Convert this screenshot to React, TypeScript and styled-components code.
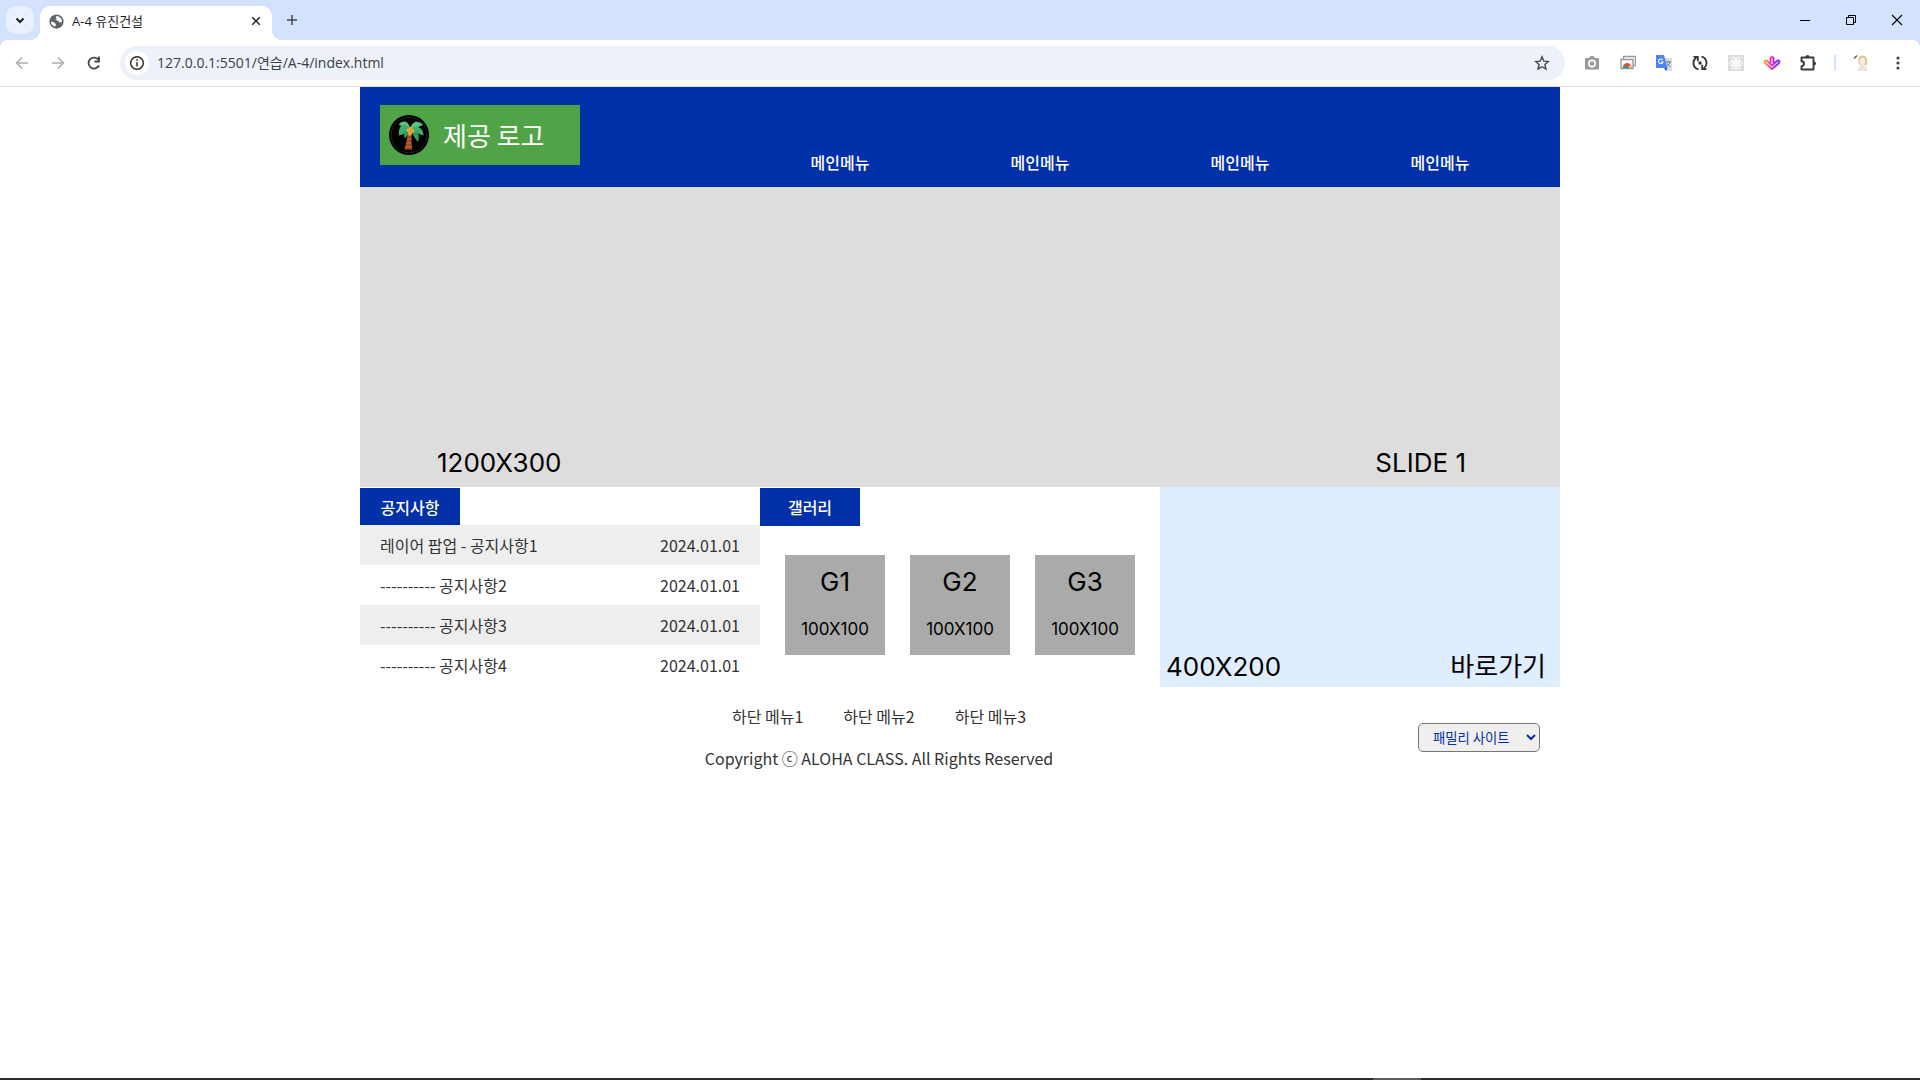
import React from "react";
import styled, { createGlobalStyle } from "styled-components";

const kr = `"Noto Sans CJK KR", sans-serif`;
const art = `Inter, "Noto Sans CJK KR", sans-serif`;
const chromeFont = `"Open Sans", "Noto Sans CJK KR", sans-serif`;

const GlobalStyle = createGlobalStyle`
  *, *::before, *::after { box-sizing: border-box; }
  body { margin: 0; background: #fff; color: #333; font: 16px/24px ${kr}; }
  h1, h2, p, ul { margin: 0; padding: 0; }
  ul { list-style: none; }
  a { color: inherit; text-decoration: none; }
  button { border: 0; padding: 0; background: none; color: inherit; font: inherit; }
  svg { display: block; flex: none; }
`;

const Screen = styled.div`
  display: flex;
  flex-direction: column;
  min-height: 100vh;
`;

/* ---------- browser frame ---------- */
const TabStrip = styled.div`
  display: flex;
  height: 40px;
  padding-left: 6px;
  background: #d3e3fd;
`;
const TabSearch = styled.button`
  display: grid;
  place-items: center;
  align-self: center;
  width: 28px;
  height: 28px;
  margin-right: 6px;
  border-radius: 10px;
  background: #e9f1fe;
  color: #1f1f1f;
`;
const Tab = styled.div`
  position: relative;
  display: flex;
  align-items: center;
  gap: 8px;
  width: 232px;
  margin-top: 6px;
  padding: 0 10px 4px 9px;
  border-radius: 10px 10px 0 0;
  background: #fff;
  color: #1f1f1f;
  font: 13px/20px ${chromeFont};
  &::before, &::after {
    content: "";
    position: absolute;
    bottom: 0;
    width: 10px;
    height: 10px;
  }
  &::before {
    left: -10px;
    background: radial-gradient(circle at 0 0, transparent 10px, #fff 10px);
  }
  &::after {
    right: -10px;
    background: radial-gradient(circle at 100% 0, transparent 10px, #fff 10px);
  }
`;
const TabTitle = styled.span`
  flex: 1;
`;
const IconButton = styled.button<{ $size?: number; $color?: string }>`
  display: grid;
  place-items: center;
  flex: none;
  width: ${(p) => p.$size ?? 36}px;
  height: ${(p) => p.$size ?? 36}px;
  color: ${(p) => p.$color ?? "#474747"};
`;
const WindowControls = styled.div`
  display: flex;
  margin-left: auto;
`;
const WindowButton = styled.button`
  display: grid;
  place-items: center;
  width: 46px;
  height: 40px;
  color: #000;
`;
const Toolbar = styled.div`
  display: flex;
  align-items: center;
  height: 47px;
  padding: 0 4px;
  border-bottom: 1px solid #dfe1e5;
  border-radius: 8px 8px 0 0;
  background: #fff;
`;
const ToolbarBack = styled.div`
  background: #d3e3fd;
`;
const AddressBar = styled.form`
  display: flex;
  align-items: center;
  flex: 1;
  height: 34px;
  margin: 0 9px 0 8px;
  padding: 0 5px;
  border-radius: 17px;
  background: #edf2fa;
`;
const SiteInfo = styled.button`
  display: grid;
  place-items: center;
  width: 24px;
  height: 24px;
  border-radius: 12px;
  background: #fff;
  color: #333;
`;
const AddressInput = styled.input`
  flex: 1;
  min-width: 0;
  padding: 0 8px;
  border: 0;
  outline: 0;
  background: none;
  color: #3c4043;
  font: 14px/20px ${chromeFont};
`;
const Separator = styled.span`
  width: 2px;
  height: 16px;
  margin: 0 8px;
  background: #d3e3fd;
`;
const Taskbar = styled.div`
  display: flex;
  height: 2px;
  margin-top: auto;
  padding-right: 26%;
  justify-content: flex-end;
  background: #2d2a2b;
`;
const TaskbarItem = styled.span`
  width: 48px;
  background: #5d5b5c;
`;

/* ---------- site ---------- */
const Site = styled.div`
  width: 100%;
  max-width: 1200px;
  margin: 0 auto;
`;
const Header = styled.header`
  display: flex;
  justify-content: space-between;
  height: 100px;
  padding: 18px 20px 13px;
  background: #0230a9;
`;
const Logo = styled.a`
  display: flex;
  align-items: center;
  gap: 14px;
  width: 200px;
  height: 60px;
  padding: 0 9px;
  background: #50a346;
  && { color: #fff; }
  font: 26px/36px ${kr};
`;
const Nav = styled.nav`
  align-self: flex-end;
  width: 800px;
`;
const MainMenu = styled.ul`
  display: grid;
  grid-template-columns: repeat(4, 1fr);
  color: #fff;
  font-weight: 500;
  text-align: center;
`;
const Slide = styled.section`
  display: flex;
  justify-content: space-between;
  align-items: flex-end;
  height: 300px;
  padding: 0 94px 6px 77px;
  background: #ddd;
  color: #000;
  font: 26px/36px ${art};
`;
const Contents = styled.main`
  display: grid;
  grid-template-columns: repeat(3, 1fr);
  height: 200px;
`;
const SectionTitle = styled.h2<{ $height: number }>`
  width: 100px;
  height: ${(p) => p.$height}px;
  margin-top: 1px;
  background: #0230a9;
  color: #fff;
  font-size: 16px;
  font-weight: 500;
  line-height: 38px;
  text-align: center;
`;
const Notice = styled.li`
  display: flex;
  justify-content: space-between;
  padding: 0 20px;
  line-height: 40px;
  &:nth-child(odd) { background: #eee; }
`;
const Gallery = styled.ul`
  display: flex;
  justify-content: space-evenly;
  padding-top: 29px;
`;
const GalleryItem = styled.li`
  display: flex;
  flex-direction: column;
  align-items: center;
  gap: 17px;
  width: 100px;
  height: 100px;
  padding-top: 9px;
  background: #aaa;
  color: #000;
  font: 26px/36px ${art};
`;
const GallerySize = styled.span`
  font-size: 17px;
  line-height: 24px;
`;
const Shortcut = styled.a`
  display: flex;
  justify-content: space-between;
  align-items: flex-end;
  padding: 0 14px 2px 6px;
  background: #deedff;
  && { color: #000; }
  font: 26px/36px ${art};
`;
const Footer = styled.footer`
  display: flex;
  align-items: center;
  gap: 20px;
  height: 100px;
  padding-right: 20px;
`;
const FooterText = styled.div`
  flex: 1;
  display: flex;
  flex-direction: column;
  align-items: center;
  gap: 18px;
`;
const FooterMenu = styled.ul`
  display: flex;
  gap: 40px;
`;
const FamilySite = styled.select`
  width: 122px;
  height: 29px;
  padding: 0 10px;
  border: 1px solid #767676;
  border-radius: 5px;
  background: #efefef;
  color: #0230a9;
  font-family: ${kr};
`;

/* ---------- icons ---------- */
type StrokeProps = { d: string; size?: number; w?: number };
const Stroke = ({ d, size = 16, w = 2 }: StrokeProps) => (
  <svg width={size} height={size} viewBox="0 0 16 16" fill="none" stroke="currentColor" strokeWidth={w}>
    <path d={d} />
  </svg>
);

const Globe = () => (
  <svg width="15" height="15" viewBox="0 0 16 16">
    <circle cx="8" cy="8" r="7.600" fill="#5f6368" />
    <path d="M8.600 2c-1 .3-1.600 1-1.400 1.900.9.100 1.300.8.900 1.500-.6.500-1.300.4-1.300 1.300 1.200.3 3.200-.1 3.700 1.300.2.900.9 1 1.900.9.800 0 1.300-.4 1.500-1C13.700 4.800 11.800 2.500 8.600 2zM2 8.200c1.600 0 3 .2 3.600 1.100.5.900 1.700.6 1.900 1.500.1.900-.9 1.200-.8 2.700C4 12.900 2 11 2 8.200z" fill="#fff" />
  </svg>
);
const Camera = () => (
  <svg width="16" height="16" viewBox="0 0 16 16">
    <path d="M2 3h3l1.500-2h3L11 3h3a1 1 0 0 1 1 1v9.500a1 1 0 0 1-1 1H2a1 1 0 0 1-1-1V4a1 1 0 0 1 1-1z" fill="#9a9a9a" />
    <circle cx="8" cy="8.500" r="4" fill="#fff" />
    <circle cx="8" cy="8.500" r="2.300" fill="#9a9a9a" />
  </svg>
);
const Captures = () => (
  <svg width="16" height="16" viewBox="0 0 16 16">
    <path d="M3.500 4V1.500h12v9H13" fill="none" stroke="#999" strokeWidth="1.400" />
    <path d="M1 4.500h12v9H1z" fill="#fff" stroke="#999" strokeWidth="1.400" />
    <path d="M2.800 13a4.400 5 0 0 1 8.800 0z" fill="#e24b3b" />
    <path d="M2.800 13a4.400 5 0 0 1 1.400-3.400L7 13z" fill="#3b9c54" />
    <path d="M7.500 13l2-3q2 .8 2.100 3z" fill="#f5c02f" />
    <circle cx="7.200" cy="12.300" r="1.500" fill="#4780dc" />
  </svg>
);
const Translate = () => (
  <svg width="16" height="16" viewBox="0 0 16 16">
    <path d="M7 3h9v13H10z" fill="#dcdcdc" />
    <path d="M0 0h8l3.500 13H0z" fill="#4b87ee" />
    <path d="M8 13h3.500L10 16z" fill="#2c56b8" />
    <path d="M6.700 5A2.300 2.300 0 1 0 7 7H5" fill="none" stroke="#fff" strokeWidth="1.100" />
    <path d="M10 7h5M12.500 6v1M14 7c-.5 2-2 3.500-3 4M11.500 8.500c1 2 2 2.500 3 3" fill="none" stroke="#5e7f8c" strokeWidth="1" />
  </svg>
);
const Sync = () => (
  <svg width="16" height="16" viewBox="0 0 16 16" fill="none" stroke="#333" strokeWidth="1.800">
    <path d="M6.500 14.400A6.500 6.500 0 0 1 4.200 2.800M1.500 1.900h4.300v4.300M9.500 1.600A6.500 6.500 0 0 1 11.800 13.200M14.500 14.100h-4.300V9.800" />
    <circle cx="8" cy="8" r="1.700" fill="#333" stroke="none" />
  </svg>
);
const Atom = () => (
  <svg width="16" height="16" viewBox="0 0 16 16" fill="none" stroke="#fff" strokeWidth="1">
    <path d="M0 0h16v16H0z" fill="#dedede" stroke="none" />
    <ellipse cx="8" cy="8" rx="6.500" ry="2.500" />
    <ellipse cx="8" cy="8" rx="6.500" ry="2.500" transform="rotate(60 8 8)" />
    <ellipse cx="8" cy="8" rx="6.500" ry="2.500" transform="rotate(120 8 8)" />
    <circle cx="8" cy="8" r="1.200" fill="#fff" />
  </svg>
);
const Petals = () => (
  <svg width="18" height="16" viewBox="0 0 18 16" fill="none" strokeLinecap="round" strokeLinejoin="round">
    <defs>
      <linearGradient id="petal" x1="0" x2="1">
        <stop offset="0" stopColor="#ffab2e" />
        <stop offset=".4" stopColor="#f23fa8" />
        <stop offset=".7" stopColor="#a22bf0" />
        <stop offset="1" stopColor="#8a2cf2" />
      </linearGradient>
    </defs>
    <path d="M9 14L2 8Q1 5 3.500 5.500L9 10.500 14.500 5.500Q17 5 16 8zM7.500 8V3Q9 .8 10.500 3V8" stroke="url(#petal)" strokeWidth="2" />
  </svg>
);
const Puzzle = () => (
  <svg width="18" height="18" viewBox="0 0 18 18">
    <path d="M2.500 3.500h12v12h-12v-3.300a2.500 2.500 0 0 0 0-5z" fill="none" stroke="#3c3c3c" strokeWidth="1.900" strokeLinejoin="round" />
    <path d="M6.500 3a2 2 0 0 1 4 0zM15 7.500a2 2 0 0 1 0 4z" fill="#3c3c3c" />
  </svg>
);
const Avatar = () => (
  <svg width="18" height="18" viewBox="0 0 18 18">
    <path d="M4.500 17c0-4 2-6 5-6s5 2 5 6z" fill="#eee8e4" />
    <path d="M5.500 7c-1-7 8-7 8.500-1 .2 3 .5 4-.5 5h-7z" fill="#dcc684" />
    <ellipse cx="9.500" cy="7.500" rx="2.700" ry="3.900" fill="#fbeade" />
    <path d="M8.500 11h2v3h-2z" fill="#f6dfd0" />
    <path d="M1 4.500L4 1.500" stroke="#555" strokeWidth="1.200" />
  </svg>
);
const Palm = () => (
  <svg width="40" height="40" viewBox="0 0 40 40">
    <circle cx="20" cy="20" r="20" fill="#000" />
    <circle cx="20" cy="20" r="17.800" fill="none" stroke="#2b2b2b" strokeWidth=".7" />
    <path d="M18.500 16h4.500c-1 7-.8 12.500.3 18.500h-8c2-5.500 3.500-12 3.200-18.500z" fill="#b9602f" />
    <path d="M18 22h4.500M17.600 26h4.800M16.800 30h5.800M16 33.500h7" stroke="#7c3717" strokeWidth=".9" />
    <path d="M21.500 15C20 5.500 14 4.500 9.500 9.500z" fill="#5ac27c" />
    <path d="M21.500 13.500C15 6.500 9 10 10 20.500 14 19.500 17 18 21 15z" fill="#3fae6a" />
    <path d="M20.500 15C15 15.500 13.500 19 16 23.500c2-2.500 4-5.500 5-8z" fill="#2f9a58" />
    <path d="M21.500 14C22.500 6 29.500 4.500 34 10c-4 2-8.500 3-12.500 4.500z" fill="#5ac27c" />
    <path d="M22 14c6-5 12.500-1 12.500 6.500-4-1-8-3.500-12.500-5.500z" fill="#3fae6a" />
    <path d="M23 15c5.500 0 8.500 5.500 6 12-3-3-5.500-7.500-6.500-11z" fill="#2f9a58" />
    <g fill="#e7a83c">
      <circle cx="19.500" cy="15.500" r="2" />
      <circle cx="23.500" cy="16" r="2" />
      <circle cx="21" cy="18.500" r="1.900" />
      <circle cx="21.500" cy="13.500" r="1.700" />
    </g>
  </svg>
);

const notices = ["레이어 팝업 - 공지사항1", "---------- 공지사항2", "---------- 공지사항3", "---------- 공지사항4"];

export default function App() {
  return (
    <Screen>
      <GlobalStyle />
      <TabStrip>
        <TabSearch aria-label="탭 검색"><Stroke d="M4.500 6.500L8 10l3.500-3.500" /></TabSearch>
        <Tab>
          <Globe />
          <TabTitle>A-4 유진건설</TabTitle>
          <IconButton $size={12} $color="#1f1f1f" aria-label="탭 닫기"><Stroke size={12} d="M3 3l10 10M13 3L3 13" /></IconButton>
        </Tab>
        <IconButton $size={40} aria-label="새 탭"><Stroke d="M8 3v10M3 8h10" w={1.5} /></IconButton>
        <WindowControls>
          <WindowButton aria-label="최소화"><Stroke d="M3 8.500h10" w={1} /></WindowButton>
          <WindowButton aria-label="이전 크기로"><Stroke d="M3.500 5.500h7v7h-7zM5.500 5.500v-2h7v7h-2" w={1} /></WindowButton>
          <WindowButton aria-label="닫기"><Stroke d="M3 3l10 10M13 3L3 13" w={1.2} /></WindowButton>
        </WindowControls>
      </TabStrip>
      <ToolbarBack>
        <Toolbar>
          <IconButton $color="#b0b0b0" aria-label="뒤로"><Stroke d="M14 8H3M8 2.500L2.500 8 8 13.500" w={1.6} /></IconButton>
          <IconButton $color="#b0b0b0" aria-label="앞으로"><Stroke d="M2 8h11M8 2.500L13.500 8 8 13.500" w={1.6} /></IconButton>
          <IconButton aria-label="새로고침"><Stroke d="M13 10.500A5.500 5.500 0 1 1 12.500 4.800M13 1.500v5H8.500" w={1.8} /></IconButton>
          <AddressBar onSubmit={(e) => e.preventDefault()}>
            <SiteInfo type="button" aria-label="사이트 정보"><Stroke d="M8 1.700a6.300 6.300 0 1 0 .01 0zM8 7v4.500M8 4v1.800" w={1.5} /></SiteInfo>
            <AddressInput aria-label="주소" defaultValue="127.0.0.1:5501/연습/A-4/index.html" />
            <IconButton type="button" aria-label="북마크">
              <Stroke d="M8 1.800l1.800 4.300 4.600.4-3.500 3 1.100 4.600L8 11.700l-4 2.400 1.100-4.600-3.500-3 4.600-.4z" w={1.4} />
            </IconButton>
          </AddressBar>
          <IconButton aria-label="캡처"><Camera /></IconButton>
          <IconButton aria-label="화면 모음"><Captures /></IconButton>
          <IconButton aria-label="번역"><Translate /></IconButton>
          <IconButton aria-label="동기화"><Sync /></IconButton>
          <IconButton aria-label="개발자 도구"><Atom /></IconButton>
          <IconButton aria-label="색상"><Petals /></IconButton>
          <IconButton aria-label="확장 프로그램"><Puzzle /></IconButton>
          <Separator />
          <IconButton aria-label="프로필"><Avatar /></IconButton>
          <IconButton aria-label="메뉴">
            <svg width="16" height="16" viewBox="0 0 16 16" fill="currentColor">
              <circle cx="8" cy="3" r="1.600" /><circle cx="8" cy="8" r="1.600" /><circle cx="8" cy="13" r="1.600" />
            </svg>
          </IconButton>
        </Toolbar>
      </ToolbarBack>

      <Site>
        <Header>
          <Logo href="#"><Palm />제공 로고</Logo>
          <Nav>
            <MainMenu>
              {[1, 2, 3, 4].map((n) => <li key={n}><a href="#">메인메뉴</a></li>)}
            </MainMenu>
          </Nav>
        </Header>
        <Slide><span>1200X300</span><span>SLIDE 1</span></Slide>
        <Contents>
          <section>
            <SectionTitle $height={37}>공지사항</SectionTitle>
            <ul>
              {notices.map((text) => <Notice key={text}><a href="#">{text}</a><span>2024.01.01</span></Notice>)}
            </ul>
          </section>
          <section>
            <SectionTitle $height={38}>갤러리</SectionTitle>
            <Gallery>
              {["G1", "G2", "G3"].map((name) => (
                <GalleryItem key={name}>{name}<GallerySize>100X100</GallerySize></GalleryItem>
              ))}
            </Gallery>
          </section>
          <Shortcut href="#"><span>400X200</span><span>바로가기</span></Shortcut>
        </Contents>
        <Footer>
          <FooterText>
            <FooterMenu>
              {[1, 2, 3].map((n) => <li key={n}><a href="#">하단 메뉴{n}</a></li>)}
            </FooterMenu>
            <p>Copyright ⓒ ALOHA CLASS. All Rights Reserved</p>
          </FooterText>
          <FamilySite aria-label="패밀리 사이트"><option>패밀리 사이트</option></FamilySite>
        </Footer>
      </Site>
      <Taskbar><TaskbarItem /></Taskbar>
    </Screen>
  );
}
